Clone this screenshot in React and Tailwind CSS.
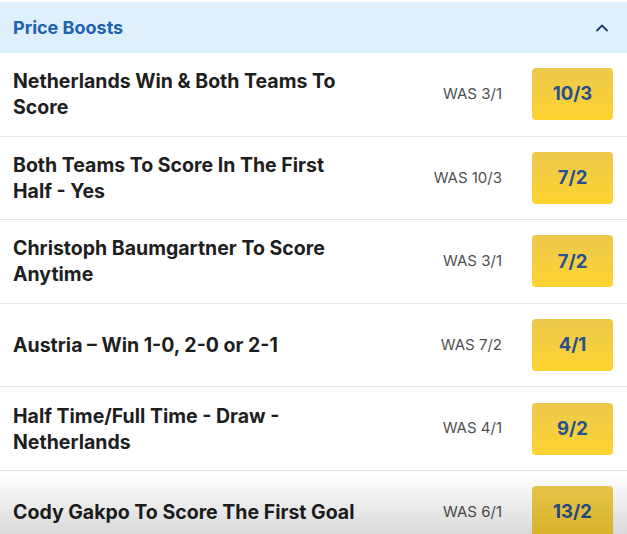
import { ChevronUp } from "lucide-react";

const boosts = [
  { id: 1, title: "Netherlands Win & Both Teams To Score", was: "3/1", odds: "10/3" },
  { id: 2, title: "Both Teams To Score In The First Half - Yes", was: "10/3", odds: "7/2" },
  { id: 3, title: "Christoph Baumgartner To Score Anytime", was: "3/1", odds: "7/2" },
  { id: 4, title: "Austria \u2013 Win 1-0, 2-0 or 2-1", was: "7/2", odds: "4/1" },
  { id: 5, title: "Half Time/Full Time - Draw - Netherlands", was: "4/1", odds: "9/2" },
  { id: 6, title: "Cody Gakpo To Score The First Goal", was: "6/1", odds: "13/2" },
];

const App = () => {
  return (
    <div className="relative w-[627px] h-[534px] overflow-hidden bg-white pt-[2px] font-['Inter',sans-serif]">
      <div className="flex items-center justify-between h-[51px] bg-[#ddf0fc] pl-[13px] pr-[15px]">
        <h2 className="text-[18px] font-bold text-[#1f62b0]">Price Boosts</h2>
        <ChevronUp size={20} strokeWidth={2.2} className="text-[#1c3d6b]" />
      </div>
      <div>
        {boosts.map((b) => (
          <div
            key={b.id}
            className="flex items-center h-[83.6px] border-b border-[#e4e4e4] pl-[13px] pr-[14px]"
          >
            <div className="w-[347px] text-[19.5px] leading-[26px] font-bold text-[#1e1e1e]">
              {b.title}
            </div>
            <div className="ml-auto text-[15px] text-[#505050]">WAS {b.was}</div>
            <div className="ml-[30px] flex items-center justify-center w-[81px] h-[52px] rounded-[4px] bg-gradient-to-b from-[#ecc94b] to-[#fed42e] text-[18.5px] font-bold text-[#26508f]">
              {b.odds}
            </div>
          </div>
        ))}
      </div>
      <div className="pointer-events-none absolute left-0 right-0 bottom-0 h-[60px] bg-gradient-to-b from-transparent to-black/15" />
    </div>
  );
};

export default App;
